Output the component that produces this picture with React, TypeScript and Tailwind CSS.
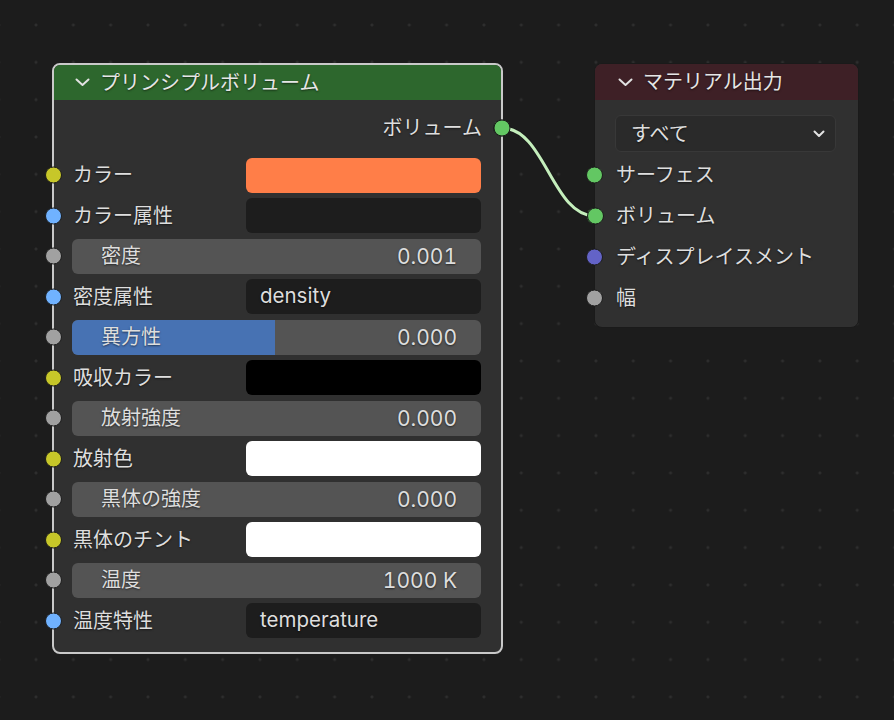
import React from "react";

type Row =
  | { kind: "color"; label: string; socket: string; color: string }
  | { kind: "text"; label: string; socket: string; value: string }
  | { kind: "slider"; label: string; socket: string; value: string; fill?: number };

const YELLOW = "#c7c729";
const BLUE = "#70b2ff";
const GRAY = "#a1a1a1";
const GREEN = "#63c763";
const PURPLE = "#6363c7";

const rows: Row[] = [
  { kind: "color", label: "カラー", socket: YELLOW, color: "#ff7e48" },
  { kind: "text", label: "カラー属性", socket: BLUE, value: "" },
  { kind: "slider", label: "密度", socket: GRAY, value: "0.001" },
  { kind: "text", label: "密度属性", socket: BLUE, value: "density" },
  { kind: "slider", label: "異方性", socket: GRAY, value: "0.000", fill: 203 },
  { kind: "color", label: "吸収カラー", socket: YELLOW, color: "#000000" },
  { kind: "slider", label: "放射強度", socket: GRAY, value: "0.000" },
  { kind: "color", label: "放射色", socket: YELLOW, color: "#ffffff" },
  { kind: "slider", label: "黒体の強度", socket: GRAY, value: "0.000" },
  { kind: "color", label: "黒体のチント", socket: YELLOW, color: "#ffffff" },
  { kind: "slider", label: "温度", socket: GRAY, value: "1000 K" },
  { kind: "text", label: "温度特性", socket: BLUE, value: "temperature" },
];

function Socket({ color, className }: { color: string; className: string }) {
  return (
    <span
      className={`absolute top-1/2 -translate-y-1/2 w-[17px] h-[17px] rounded-full border border-[#1b1b1b] ${className}`}
      style={{ backgroundColor: color }}
    />
  );
}

function Chevron({ small }: { small?: boolean }) {
  return small ? (
    <svg width="12" height="8" viewBox="0 0 12 8">
      <polyline
        points="1.5,1.5 6,6 10.5,1.5"
        fill="none"
        stroke="#e2e2e2"
        strokeWidth="2"
        strokeLinecap="round"
        strokeLinejoin="round"
      />
    </svg>
  ) : (
    <svg width="15" height="9" viewBox="0 0 15 9">
      <polyline
        points="1.5,1.5 7.5,7 13.5,1.5"
        fill="none"
        stroke="#e2e2e2"
        strokeWidth="2"
        strokeLinecap="round"
        strokeLinejoin="round"
      />
    </svg>
  );
}

function InputRow({ row }: { row: Row }) {
  if (row.kind === "slider") {
    return (
      <div className="relative h-[35px]">
        <Socket color={row.socket} className="left-[-27px]" />
        <div className="relative h-full rounded-[6px] bg-[#545454] overflow-hidden flex items-center justify-between pl-[29px] pr-[24px]">
          {row.fill ? (
            <div className="absolute left-0 top-0 bottom-0 bg-[#4772b3]" style={{ width: row.fill }} />
          ) : null}
          <span className="relative">{row.label}</span>
          <span className="relative text-[21px] tabular-nums">{row.value}</span>
        </div>
      </div>
    );
  }
  return (
    <div className="relative h-[35px] flex items-center">
      <Socket color={row.socket} className="left-[-27px]" />
      <span className="w-[174px] pl-[1px]">{row.label}</span>
      {row.kind === "color" ? (
        <div className="w-[235px] h-full rounded-[6px]" style={{ backgroundColor: row.color }} />
      ) : (
        <div className="w-[235px] h-full rounded-[6px] bg-[#1d1d1d] flex items-center pl-[14px] text-[20.5px]">
          {row.value}
        </div>
      )}
    </div>
  );
}

export default function App() {
  return (
    <div className="relative w-[894px] h-[720px] overflow-hidden bg-[#1c1c1c] bg-[radial-gradient(circle,#2e2e2e_1.2px,transparent_1.8px)] bg-[size:37.33px_37.33px] bg-[position:17.33px_6.33px] font-['Inter','Noto_Sans_CJK_JP',sans-serif] text-[20px] leading-none text-[#dedede] [text-shadow:0_1px_2px_rgba(0,0,0,0.55)]">
      {/* Principled Volume node */}
      <div className="absolute left-[52px] top-[63px] w-[451px] h-[591px] rounded-[8px] border-2 border-[#c9c9c9] bg-[#303030] flex flex-col">
        <div className="h-[35px] rounded-t-[6px] bg-[#2d672d] flex items-center pl-[21px] gap-[10px]">
          <Chevron />
          <span className="text-[#e6e6e6]">プリンシプルボリューム</span>
        </div>
        <div className="flex flex-col pt-[10px] pl-[18px] pr-[20px]">
          <div className="relative h-[36px] flex items-center justify-end">
            <span className="mr-[-1px]">ボリューム</span>
            <Socket color={GREEN} className="right-[-29px]" />
          </div>
          <div className="flex flex-col gap-[5.5px] mt-[11.5px]">
            {rows.map((r) => (
              <InputRow key={r.label} row={r} />
            ))}
          </div>
        </div>
      </div>

      {/* Material Output node */}
      <div className="absolute left-[594px] top-[63px] w-[265px] h-[265px] rounded-[8px] border border-[#1a1a1a] bg-[#303030] flex flex-col">
        <div className="h-[36px] rounded-t-[7px] bg-[#3e2026] flex items-center pl-[23px] gap-[10px]">
          <Chevron />
          <span className="text-[#e6e6e6]">マテリアル出力</span>
        </div>
        <div className="flex flex-col pt-[15px] pl-[20px] pr-[22px]">
          <div className="h-[37px] rounded-[6px] bg-[#2a2a2a] border border-[#383838] flex items-center justify-between pl-[15px] pr-[10px]">
            <span>すべて</span>
            <Chevron small />
          </div>
          <div className="flex flex-col mt-[2px]">
            {["サーフェス", "ボリューム", "ディスプレイスメント", "幅"].map((l, i) => (
              <div key={l} className="relative h-[41px] flex items-center">
                <Socket color={[GREEN, GREEN, PURPLE, GRAY][i]} className="left-[-29px]" />
                <span className="ml-[1px]">{l}</span>
              </div>
            ))}
          </div>
        </div>
      </div>

      {/* Link */}
      <svg className="absolute left-0 top-0 pointer-events-none" width="894" height="720">
        <path d="M502 128 C 545 128, 552 216, 595 216" fill="none" stroke="#1a1a1a" strokeWidth="5" />
        <path d="M502 128 C 545 128, 552 216, 595 216" fill="none" stroke="#c4eebc" strokeWidth="3" />
        <circle cx="502" cy="128" r="8" fill={GREEN} stroke="#1b1b1b" strokeWidth="1" />
        <circle cx="595.5" cy="216" r="8" fill={GREEN} stroke="#1b1b1b" strokeWidth="1" />
      </svg>
    </div>
  );
}
